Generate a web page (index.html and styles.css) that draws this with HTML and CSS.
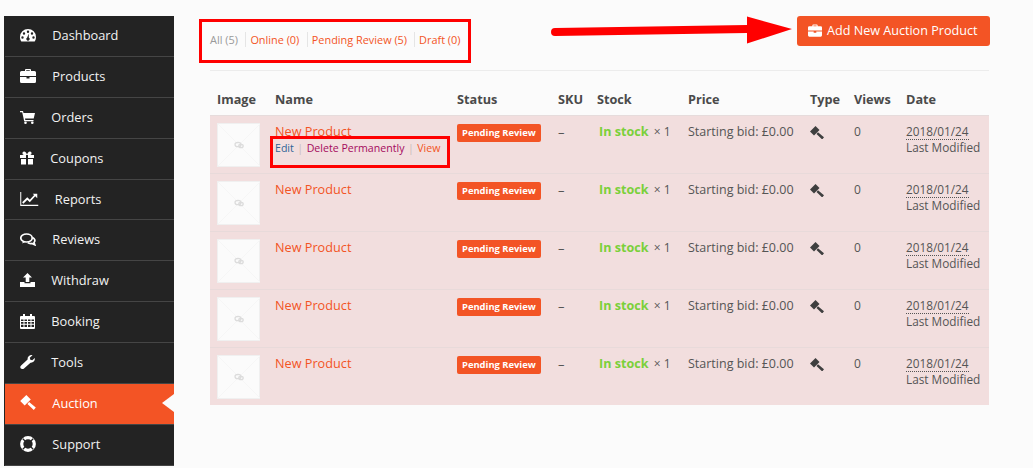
FILE: index.html
```html
<!DOCTYPE html>
<html lang="en">
<head>
<meta charset="utf-8">
<title>Auction Products</title>
<link rel="stylesheet" href="styles.css">
</head>
<body>
<div class="page">
  <nav class="sidebar">
    <a class="item"><svg width="16" height="14" viewBox="0 0 16 14"><path fill="#fff" fill-rule="evenodd" d="M8 1a8 8 0 0 1 8 8c0 1.800-.5 3.300-1.300 4.500H1.300C.5 12.300 0 10.800 0 9a8 8 0 0 1 8-8zM8 2.500a1.200 1.200 0 1 0 0 2.400 1.200 1.200 0 0 0 0-2.400zM4 4.300a1.200 1.200 0 1 0 0 2.400 1.200 1.200 0 0 0 0-2.400zM12 4.300a1.200 1.200 0 1 0 0 2.400 1.200 1.200 0 0 0 0-2.400zM2.500 8.300a1.200 1.200 0 1 0 0 2.400 1.200 1.200 0 0 0 0-2.400zM13.500 8.300a1.200 1.200 0 1 0 0 2.400 1.200 1.200 0 0 0 0-2.400zM8.800 5.500 7.200 9.500a1.700 1.700 0 1 0 1.600 0z"/></svg><span>Dashboard</span></a>
    <a class="item"><svg width="16" height="14" viewBox="0 0 16 14"><path fill="#fff" d="M5 2V1a1 1 0 0 1 1-1h4a1 1 0 0 1 1 1v1h3.500A1.500 1.500 0 0 1 16 3.500V7H0V3.500A1.500 1.500 0 0 1 1.500 2zm1.200 0h3.600V1.200H6.200zM0 8h6.500v1.500h3V8H16v4.500a1.500 1.500 0 0 1-1.500 1.500h-13A1.500 1.500 0 0 1 0 12.500z"/></svg><span>Products</span></a>
    <a class="item"><svg width="15" height="14" viewBox="0 0 15 14"><path fill="#fff" d="M0 1h3l.5 2H15l-1.300 5.500H5l.3 1.500H13.500v1.300H4.200L2.200 2.300H0z"/><circle cx="5.500" cy="12.700" r="1.300" fill="#fff"/><circle cx="12.300" cy="12.700" r="1.300" fill="#fff"/></svg><span>Orders</span></a>
    <a class="item"><svg width="14" height="14" viewBox="0 0 14 14"><path fill="#fff" d="M0 4h6v3H0zM8 4h6v3H8zM1 8h5v5.500H1zM8 8h5v5.500H8zM6.700 4H4C2 4 2 .5 4 .5c1.500 0 2.500 1.500 3 3.200C7.500 2 8.500.5 10 .5c2 0 2 3.500 0 3.500z"/></svg><span>Coupons</span></a>
    <a class="item"><svg width="18.500" height="14" viewBox="0 0 18 14"><path fill="#fff" d="M0 0h1v12.800h17V14H0z"/><path fill="none" stroke="#fff" stroke-width="1.800" d="M2.500 11 7 6.500l2.500 2.500 5.500-6"/><path fill="#fff" d="M12.500 1.800H17v4.500z"/></svg><span>Reports</span></a>
    <a class="item"><svg width="16" height="13" viewBox="0 0 16 13"><ellipse cx="6.500" cy="5" rx="5.700" ry="4" fill="none" stroke="#fff" stroke-width="1.700"/><path fill="none" stroke="#fff" stroke-width="1.700" d="M12.500 4.500c2.500 1 3 3.500 1.500 5l.8 2.300-3-1.300c-1.500.3-3 0-4-.8"/><path fill="#fff" d="M3 8l-.8 2.500 3-1.500z"/></svg><span>Reviews</span></a>
    <a class="item"><svg width="15" height="14" viewBox="0 0 15 14"><path fill="#fff" d="M7.500 0 12 4.500H9.300V9H5.700V4.500H3zM0 9h4.500v1.300h6V9H15v5H0z"/></svg><span>Withdraw</span></a>
    <a class="item"><svg width="15" height="15" viewBox="0 0 15 15"><path fill="#fff" fill-rule="evenodd" d="M1 2h2V0h2v2h5V0h2v2h2a1 1 0 0 1 1 1v11a1 1 0 0 1-1 1H1a1 1 0 0 1-1-1V3a1 1 0 0 1 1-1zM1 5.500V7h2.500V5.500zM4.500 5.500V7h2.500V5.500zM8 5.500V7h2.500V5.500zM11.500 5.500V7H14V5.500zM1 8v1.800h2.500V8zM4.500 8v1.800h2.500V8zM8 8v1.800h2.500V8zM11.500 8v1.800H14V8zM1 10.800V13h2.500v-2.200zM4.500 10.800V13h2.500v-2.200zM8 10.800V13h2.500v-2.200zM11.500 10.800V13H14v-2.200z"/></svg><span>Booking</span></a>
    <a class="item"><svg width="15" height="14" viewBox="0 0 15 14"><path fill="#fff" d="M14.800 3c.5 2.500-1.500 5-4.300 4.700L4 13.600c-1 1-3.300.3-3.600-.8-.3-1 0-1.700.7-2.300l6.500-6C7.200 1.800 9.800-.5 12.500.2L9.800 2.700l.5 2 2 .5z"/></svg><span>Tools</span></a>
    <a class="item active"><svg width="16" height="15" viewBox="0 0 14 13.500"><path fill="#fff" d="M5.500 0 9.500 4 4 9.500 0 5.500zM8 6.200 14 11.300 12.200 13.500 6.500 8z"/></svg><span>Auction</span></a>
    <a class="item"><svg width="16" height="16" viewBox="0 0 16 16"><circle cx="8" cy="8" r="6.300" fill="none" stroke="#fff" stroke-width="3.200"/><path stroke="#232323" stroke-width="1.300" d="M2.800 2.800 5.500 5.500M13.200 2.800 10.500 5.500M2.800 13.200 5.500 10.500M13.200 13.200 10.500 10.500"/></svg><span>Support</span></a>
  </nav>

  <main class="content">
    <div class="topbar">
      <ul class="filters">
        <li class="current">All (5)</li>
        <li>Online (0)</li>
        <li>Pending Review (5)</li>
        <li>Draft (0)</li>
      </ul>
      <a class="add-btn"><svg width="14" height="13" viewBox="0 0 16 14"><path fill="#fff" d="M5 2V1a1 1 0 0 1 1-1h4a1 1 0 0 1 1 1v1h3.500A1.500 1.500 0 0 1 16 3.500V7H0V3.500A1.500 1.500 0 0 1 1.500 2zm1.200 0h3.600V1.200H6.200zM0 8h6.500v1.500h3V8H16v4.500a1.500 1.500 0 0 1-1.500 1.500h-13A1.500 1.500 0 0 1 0 12.500z"/></svg>Add New Auction Product</a>
    </div>

    <table class="products">
      <colgroup>
        <col class="c-image"><col class="c-name"><col class="c-status"><col class="c-sku"><col class="c-stock"><col class="c-price"><col class="c-type"><col class="c-views"><col class="c-date">
      </colgroup>
      <thead>
        <tr><th>Image</th><th>Name</th><th>Status</th><th>SKU</th><th>Stock</th><th>Price</th><th>Type</th><th>Views</th><th>Date</th></tr>
      </thead>
      <tbody>
        <tr>
          <td><div class="thumb"><svg width="42" height="42" viewBox="0 0 42 42"><path stroke="#f6f6f6" d="M0 0 42 42M42 0 0 42"/><ellipse cx="20" cy="20.500" rx="3" ry="2.200" fill="none" stroke="#dcdcdc" stroke-width="1.300"/><ellipse cx="23" cy="22" rx="2.200" ry="1.700" fill="none" stroke="#dcdcdc" stroke-width="1.300"/></svg></div></td>
          <td><a class="pname">New Product</a>
            <div class="actions"><a class="edit">Edit</a><i>|</i><a class="del">Delete Permanently</a><i>|</i><a class="view">View</a></div></td>
          <td><span class="badge">Pending Review</span></td>
          <td class="sku">–</td>
          <td><b class="instock">In stock</b> × 1</td>
          <td class="price">Starting bid: £0.00</td>
          <td><svg class="gavel" width="14" height="13.500" viewBox="0 0 14 13.500"><path d="M5.500 0 9.500 4 4 9.500 0 5.500zM8 6.200 14 11.300 12.200 13.500 6.500 8z"/></svg></td>
          <td>0</td>
          <td class="date"><abbr>2018/01/24</abbr><br>Last Modified</td>
        </tr>
        <tr>
          <td><div class="thumb"><svg width="42" height="42" viewBox="0 0 42 42"><path stroke="#f6f6f6" d="M0 0 42 42M42 0 0 42"/><ellipse cx="20" cy="20.500" rx="3" ry="2.200" fill="none" stroke="#dcdcdc" stroke-width="1.300"/><ellipse cx="23" cy="22" rx="2.200" ry="1.700" fill="none" stroke="#dcdcdc" stroke-width="1.300"/></svg></div></td>
          <td><a class="pname">New Product</a></td>
          <td><span class="badge">Pending Review</span></td>
          <td class="sku">–</td>
          <td><b class="instock">In stock</b> × 1</td>
          <td class="price">Starting bid: £0.00</td>
          <td><svg class="gavel" width="14" height="13.500" viewBox="0 0 14 13.500"><path d="M5.500 0 9.500 4 4 9.500 0 5.500zM8 6.200 14 11.300 12.200 13.500 6.500 8z"/></svg></td>
          <td>0</td>
          <td class="date"><abbr>2018/01/24</abbr><br>Last Modified</td>
        </tr>
        <tr>
          <td><div class="thumb"><svg width="42" height="42" viewBox="0 0 42 42"><path stroke="#f6f6f6" d="M0 0 42 42M42 0 0 42"/><ellipse cx="20" cy="20.500" rx="3" ry="2.200" fill="none" stroke="#dcdcdc" stroke-width="1.300"/><ellipse cx="23" cy="22" rx="2.200" ry="1.700" fill="none" stroke="#dcdcdc" stroke-width="1.300"/></svg></div></td>
          <td><a class="pname">New Product</a></td>
          <td><span class="badge">Pending Review</span></td>
          <td class="sku">–</td>
          <td><b class="instock">In stock</b> × 1</td>
          <td class="price">Starting bid: £0.00</td>
          <td><svg class="gavel" width="14" height="13.500" viewBox="0 0 14 13.500"><path d="M5.500 0 9.500 4 4 9.500 0 5.500zM8 6.200 14 11.300 12.200 13.500 6.500 8z"/></svg></td>
          <td>0</td>
          <td class="date"><abbr>2018/01/24</abbr><br>Last Modified</td>
        </tr>
        <tr>
          <td><div class="thumb"><svg width="42" height="42" viewBox="0 0 42 42"><path stroke="#f6f6f6" d="M0 0 42 42M42 0 0 42"/><ellipse cx="20" cy="20.500" rx="3" ry="2.200" fill="none" stroke="#dcdcdc" stroke-width="1.300"/><ellipse cx="23" cy="22" rx="2.200" ry="1.700" fill="none" stroke="#dcdcdc" stroke-width="1.300"/></svg></div></td>
          <td><a class="pname">New Product</a></td>
          <td><span class="badge">Pending Review</span></td>
          <td class="sku">–</td>
          <td><b class="instock">In stock</b> × 1</td>
          <td class="price">Starting bid: £0.00</td>
          <td><svg class="gavel" width="14" height="13.500" viewBox="0 0 14 13.500"><path d="M5.500 0 9.500 4 4 9.500 0 5.500zM8 6.200 14 11.300 12.200 13.500 6.500 8z"/></svg></td>
          <td>0</td>
          <td class="date"><abbr>2018/01/24</abbr><br>Last Modified</td>
        </tr>
        <tr>
          <td><div class="thumb"><svg width="42" height="42" viewBox="0 0 42 42"><path stroke="#f6f6f6" d="M0 0 42 42M42 0 0 42"/><ellipse cx="20" cy="20.500" rx="3" ry="2.200" fill="none" stroke="#dcdcdc" stroke-width="1.300"/><ellipse cx="23" cy="22" rx="2.200" ry="1.700" fill="none" stroke="#dcdcdc" stroke-width="1.300"/></svg></div></td>
          <td><a class="pname">New Product</a></td>
          <td><span class="badge">Pending Review</span></td>
          <td class="sku">–</td>
          <td><b class="instock">In stock</b> × 1</td>
          <td class="price">Starting bid: £0.00</td>
          <td><svg class="gavel" width="14" height="13.500" viewBox="0 0 14 13.500"><path d="M5.500 0 9.500 4 4 9.500 0 5.500zM8 6.200 14 11.300 12.200 13.500 6.500 8z"/></svg></td>
          <td>0</td>
          <td class="date"><abbr>2018/01/24</abbr><br>Last Modified</td>
        </tr>
      </tbody>
    </table>
  </main>
</div>

<div class="mark mark-filters"></div>
<div class="mark mark-actions"></div>
<svg class="arrow" width="245" height="30" viewBox="0 0 245 30"><path fill="#f00" d="M4 12 196 9v-8.500L241 13 196 27.500V17L4 20a4 4 0 0 1 0-8z"/></svg>
</body>
</html>
```
FILE: styles.css
```css
* { box-sizing: border-box; }
html, body { margin: 0; height: 100%; }
body {
  position: relative;
  overflow: hidden;
  background: #fbfbfb;
  font-family: "Open Sans", sans-serif;
  font-size: 13px;
  color: #555;
}
.page { display: flex; align-items: flex-start; padding: 16px 0 0 4px; }

/* sidebar */
.sidebar { width: 170px; flex: none; background: #232323; }
.item {
  position: relative;
  display: flex;
  align-items: center;
  gap: 16.300px;
  height: 40.9px;
  padding: 0 0 2px 15px;
  margin-left: 1px;
  border-bottom: 1px solid #454545;
  color: #f2f2f2;
  font-size: 12.800px;
}
.item svg { flex: none; }
.item.active { background: #f35425; color: #fff; }
.item.active::after {
  content: "";
  position: absolute;
  right: 0;
  top: 10px;
  border-style: solid;
  border-color: transparent #fbfbfb transparent transparent;
  border-width: 9px 12px 9px 0;
}

/* main column */
.content { width: 779px; margin-left: 36px; margin-top: -16px; }
.topbar {
  display: flex;
  justify-content: space-between;
  align-items: flex-start;
  height: 71px;
  padding-top: 16px;
  border-bottom: 1px solid #ececec;
}
.filters {
  display: flex;
  list-style: none;
  margin: 16px 0 0;
  padding: 0;
  font-size: 10.900px;
  line-height: 15px;
  color: #f35425;
}
.filters li { padding: 0 7.500px 0 4px; border-left: 1px solid #e5e5e5; }
.filters li:first-child { padding-left: 0; border-left: 0; color: #999; }
.filters li:nth-child(3) { padding-right: 7px; }
.add-btn {
  display: flex;
  align-items: center;
  gap: 5px;
  width: 193px;
  height: 30px;
  margin-right: -1px;
  padding: 0 0 1px 11px;
  border-radius: 3px;
  background: #f35425;
  color: #fff;
  font-size: 12.600px;
}

/* table */
.products { width: 779px; margin-top: 14px; border-collapse: collapse; table-layout: fixed; }
.c-image { width: 58px; }
.c-name { width: 182px; }
.c-status { width: 101px; }
.c-sku { width: 39px; }
.c-stock { width: 91px; }
.c-price { width: 122px; }
.c-type { width: 44px; }
.c-views { width: 52px; }
.c-date { width: 90px; }
th {
  height: 30px;
  padding: 0 7px 2px;
  text-align: left;
  font-size: 12.700px;
  font-weight: 700;
  color: #4a4a4a;
}
thead tr { border-bottom: 1px solid #e6dcdc; }
tbody tr { height: 58px; background: #f2dede; border-bottom: 1px solid #e8dada; }
tbody tr:last-child { border-bottom: 0; }
td { padding: 8px 7px 0; vertical-align: top; line-height: 16px; font-size: 12px; color: #555; }
.thumb { width: 43px; height: 44px; margin-top: -1px; border: 1px solid #f0f0f0; background: #fbfbfb; }
.thumb svg { display: block; }
.pname { display: block; margin-top: -1px; font-size: 12.700px; line-height: 16px; color: #f35425; }
.actions { margin-top: 1px; font-size: 10.600px; line-height: 16px; white-space: nowrap; }
.actions i { margin: 0 3.500px; font-style: normal; color: #c9bcbc; }
.edit { color: #2f6496; }
.del { color: #a50a5d; }
.view { color: #f35425; }
.badge {
  display: inline-block;
  padding: 0 5px;
  height: 18px;
  line-height: 18px;
  border-radius: 2px;
  background: #f35425;
  color: #fff;
  font-size: 9.400px;
  font-weight: 700;
  white-space: nowrap;
}
.sku { font-size: 13px; }
.instock { margin-left: 2px; margin-right: 2px; color: #7ad03a; font-size: 12.600px; }
.price { font-size: 12.500px; }
.gavel { display: block; margin-top: 2px; fill: #3f3f3f; }
.date { font-size: 11.800px; padding-top: 7px; }
abbr { border-bottom: 1px dotted #555; }

/* annotations drawn on top of the screenshot */
.mark { position: absolute; border: 3px solid #f00; }
.mark-filters { left: 199px; top: 19px; width: 272px; height: 44px; }
.mark-actions { left: 270px; top: 136px; width: 180px; height: 32px; }
.arrow { position: absolute; left: 551px; top: 16px; }
```
